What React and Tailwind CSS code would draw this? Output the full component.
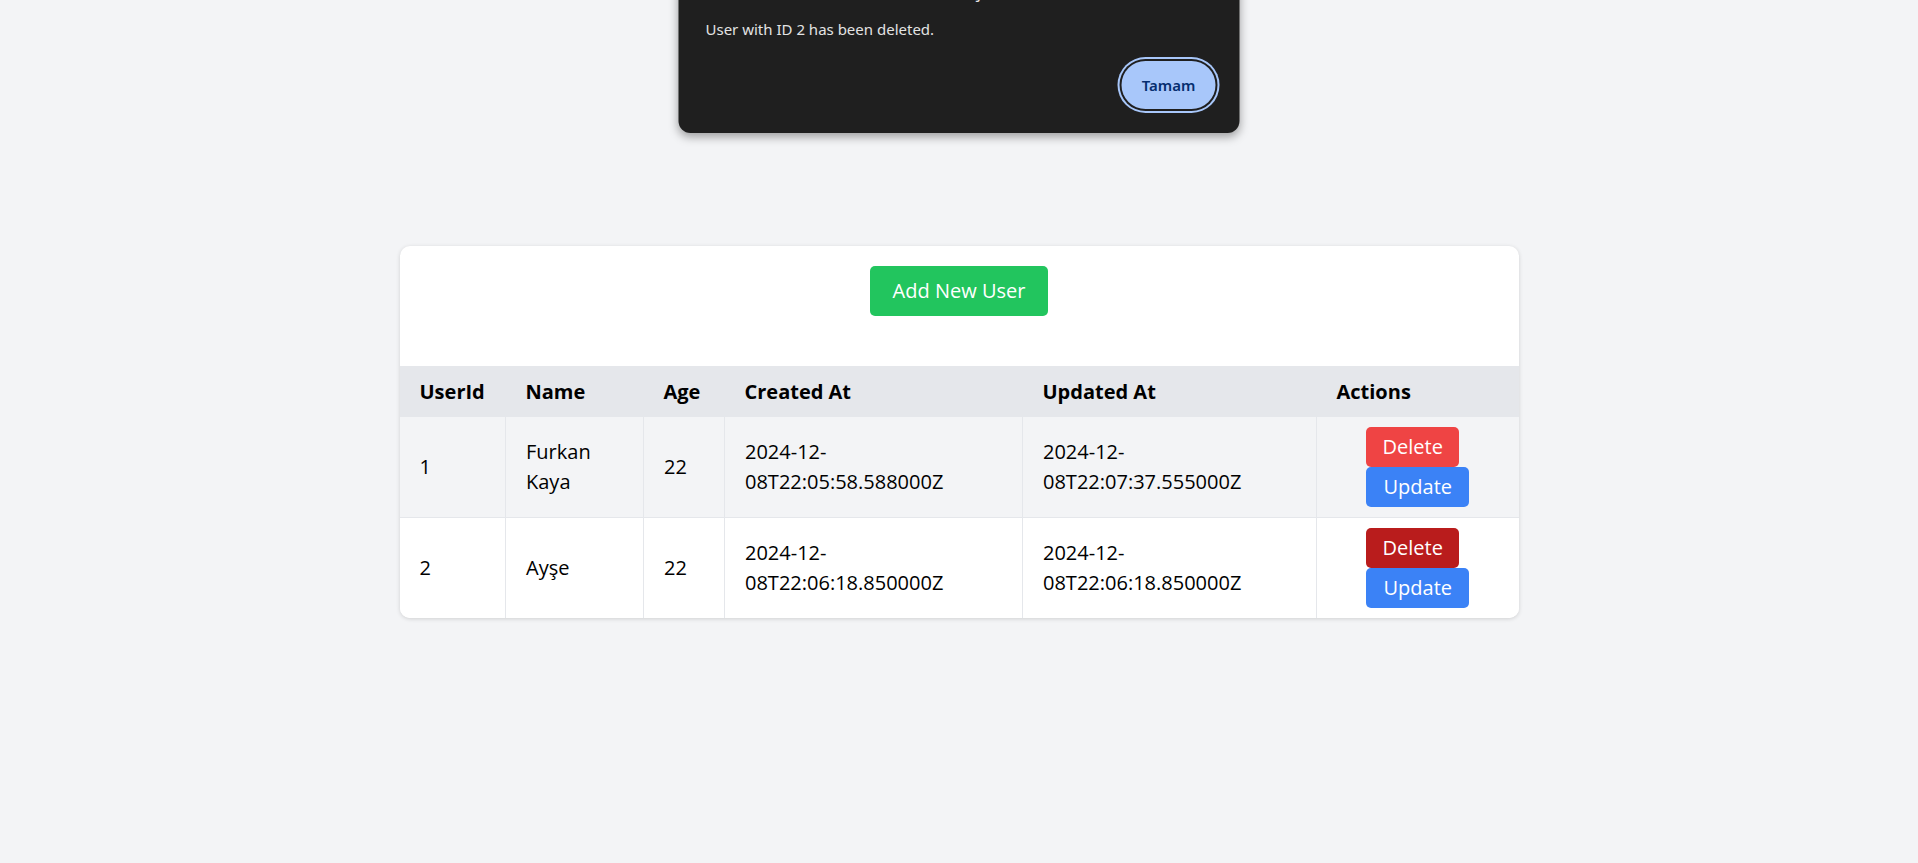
const users = [
  {
    id: 1,
    name: 'Furkan Kaya',
    age: 22,
    createdAt: '2024-12-08T22:05:58.588000Z',
    updatedAt: '2024-12-08T22:07:37.555000Z',
    deleteClass: 'bg-[#ef4444]',
    rowClass: 'bg-[#f3f4f6] border-b border-[#e5e7eb]',
  },
  {
    id: 2,
    name: 'Ayşe',
    age: 22,
    createdAt: '2024-12-08T22:06:18.850000Z',
    updatedAt: '2024-12-08T22:06:18.850000Z',
    deleteClass: 'bg-[#b91c1c]',
    rowClass: 'bg-white',
  },
];

const AlertDialog = () => {
  return (
    <div className="absolute left-1/2 top-[-40px] w-[561px] -translate-x-1/2 rounded-xl bg-[#1f1f1f] pt-[20px] pb-6 pl-[27px] pr-6 shadow-[0_4px_10px_rgba(0,0,0,0.35)] font-['Noto_Sans',sans-serif]">
      <div className="text-[17px] leading-[24px] text-[#e3e3e3]">localhost:5173 web sitesinin mesajı</div>
      <p className="mt-[15px] text-[15px] leading-[20px] text-[#e3e3e3]">User with ID 2 has been deleted.</p>
      <div className="mt-[22px] flex justify-end">
        <button className="h-[48px] w-[94px] rounded-full bg-[#a8c7fa] text-[15px] font-semibold text-[#062e6f] ring-2 ring-[#a8c7fa] ring-offset-2 ring-offset-[#1f1f1f]">
          Tamam
        </button>
      </div>
    </div>
  );
};

export default function App() {
  return (
    <div className="relative min-h-screen bg-[#f3f4f6] pt-[246px] font-['Open_Sans',sans-serif] text-black">
      <div className="mx-auto w-[1119px] overflow-hidden rounded-[10px] bg-white shadow-[0_1px_4px_rgba(0,0,0,0.15)]">
        <div className="flex justify-center pt-[20px] pb-[50px]">
          <button className="h-[50px] w-[178px] rounded-[5px] bg-[#22c55e] text-[20px] text-white">
            Add New User
          </button>
        </div>

        <table className="w-full table-fixed text-left text-[20px] leading-[30px]">
          <colgroup>
            <col className="w-[106px]" />
            <col className="w-[138px]" />
            <col className="w-[81px]" />
            <col className="w-[298px]" />
            <col className="w-[294px]" />
            <col />
          </colgroup>
          <thead>
            <tr className="h-[51px] bg-[#e5e7eb]">
              <th className="px-5 font-bold">UserId</th>
              <th className="px-5 font-bold">Name</th>
              <th className="px-5 font-bold">Age</th>
              <th className="px-5 font-bold">Created At</th>
              <th className="px-5 font-bold">Updated At</th>
              <th className="px-5 font-bold">Actions</th>
            </tr>
          </thead>
          <tbody>
            {users.map((u) => (
              <tr key={u.id} className={u.rowClass}>
                <td className="border-r border-[#e5e7eb] px-5">{u.id}</td>
                <td className="border-r border-[#e5e7eb] px-5">{u.name}</td>
                <td className="border-r border-[#e5e7eb] px-5">{u.age}</td>
                <td className="border-r border-[#e5e7eb] px-5">{u.createdAt}</td>
                <td className="border-r border-[#e5e7eb] px-5">{u.updatedAt}</td>
                <td className="px-5 py-[10px]">
                  <div className="flex flex-col items-center">
                    <button className={`mr-[10px] h-[40px] w-[93px] rounded-[5px] text-white ${u.deleteClass}`}>
                      Delete
                    </button>
                    <button className="h-[40px] w-[103px] rounded-[5px] bg-[#3b82f6] text-white">
                      Update
                    </button>
                  </div>
                </td>
              </tr>
            ))}
          </tbody>
        </table>
      </div>

      <AlertDialog />
    </div>
  );
}
